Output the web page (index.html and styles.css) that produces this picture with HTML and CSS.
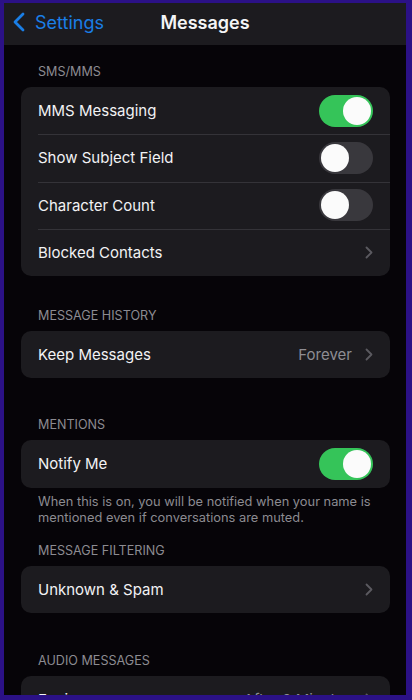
FILE: index.html
```html
<!DOCTYPE html>
<html>
<head>
<meta charset="utf-8">
<link rel="stylesheet" href="styles.css">
</head>
<body>
<div class="screen">
  <div class="nav">
    <div class="back">
      <svg class="back-icon" width="14" height="20" viewBox="0 0 14 20"><path d="M11 2 L3 10 L11 18" fill="none" stroke="#1a7ee6" stroke-width="2.8" stroke-linecap="round" stroke-linejoin="round"/></svg>
      <span>Settings</span>
    </div>
    <div class="title">Messages</div>
  </div>
  <div class="content">
    <div class="header h1">SMS/MMS</div>
    <div class="group">
      <div class="row"><span class="label">MMS Messaging</span><span class="toggle on"><span class="knob"></span></span></div>
      <div class="row"><span class="label">Show Subject Field</span><span class="toggle"><span class="knob"></span></span></div>
      <div class="row"><span class="label">Character Count</span><span class="toggle"><span class="knob"></span></span></div>
      <div class="row"><span class="label">Blocked Contacts</span><span class="chev"><svg width="8" height="13" viewBox="0 0 8 13"><path d="M1.5 1.5 L6.5 6.5 L1.5 11.5" fill="none" stroke="#5b5a60" stroke-width="1.8" stroke-linecap="round" stroke-linejoin="round"/></svg></span></div>
    </div>
    <div class="header h2">MESSAGE HISTORY</div>
    <div class="group">
      <div class="row"><span class="label">Keep Messages</span><span class="value">Forever</span><span class="chev"><svg width="8" height="13" viewBox="0 0 8 13"><path d="M1.5 1.5 L6.5 6.5 L1.5 11.5" fill="none" stroke="#5b5a60" stroke-width="1.8" stroke-linecap="round" stroke-linejoin="round"/></svg></span></div>
    </div>
    <div class="header h3">MENTIONS</div>
    <div class="group">
      <div class="row"><span class="label">Notify Me</span><span class="toggle on"><span class="knob"></span></span></div>
    </div>
    <div class="footer">When this is on, you will be notified when your name is mentioned even if conversations are muted.</div>
    <div class="header h4">MESSAGE FILTERING</div>
    <div class="group">
      <div class="row"><span class="label">Unknown &amp; Spam</span><span class="chev"><svg width="8" height="13" viewBox="0 0 8 13"><path d="M1.5 1.5 L6.5 6.5 L1.5 11.5" fill="none" stroke="#5b5a60" stroke-width="1.8" stroke-linecap="round" stroke-linejoin="round"/></svg></span></div>
    </div>
    <div class="header h5">AUDIO MESSAGES</div>
    <div class="group">
      <div class="row"><span class="label">Expire</span><span class="value">After 2 Minutes</span><span class="chev"><svg width="8" height="13" viewBox="0 0 8 13"><path d="M1.5 1.5 L6.5 6.5 L1.5 11.5" fill="none" stroke="#5b5a60" stroke-width="1.8" stroke-linecap="round" stroke-linejoin="round"/></svg></span></div>
    </div>
  </div>
</div>
</body>
</html>
```
FILE: styles.css
```css
* { box-sizing: border-box; }
html, body { margin: 0; padding: 0; }
body {
  background: #2b1186;
  font-family: "Inter", "Liberation Sans", sans-serif;
}
.screen {
  height: 700px;
  width: 412px;
  border-style: solid;
  border-color: #2b1186;
  border-width: 3px 6px 5px 4px;
  background: #060408;
  overflow: hidden;
}
.nav {
  height: 42px;
  background: #1c1b1f;
  display: flex;
  align-items: center;
  justify-content: center;
  position: relative;
}
.back {
  position: absolute;
  left: 8px;
  top: 0;
  height: 38px;
  display: flex;
  align-items: center;
  gap: 9px;
  color: #1a7ee6;
  font-size: 18px;
}
.back-icon { display: block; }
.title {
  color: #f4f4f6;
  font-size: 18px;
  font-weight: 600;
  margin-top: -4px;
}
.content {
  margin: 0 16px 0 17px;
}
.header {
  color: #8c8b91;
  font-size: 12.6px;
  line-height: 16px;
  padding-left: 17px;
  margin-bottom: 7px;
}
.h1 { margin-top: 19px; }
.h2 { margin-top: 32px; }
.h3 { margin-top: 39px; }
.h4 { margin-top: 17px; }
.h5 { margin-top: 40px; }
.group {
  background: #1c1b1f;
  border-radius: 10px;
  overflow: hidden;
}
.row {
  height: 47.25px;
  display: flex;
  align-items: center;
  padding: 0 17px;
  position: relative;
  color: #f2f2f4;
  font-size: 15px;
}
.row + .row::before {
  content: "";
  position: absolute;
  top: 0;
  left: 17px;
  right: 0;
  height: 1px;
  background: #343338;
}
.label { flex: 1; }
.value {
  color: #8e8d93;
  margin-right: 13px;
}
.chev { display: flex; align-items: center; }
.toggle {
  width: 54px;
  height: 32px;
  border-radius: 16px;
  background: #39383d;
  position: relative;
}
.toggle .knob {
  position: absolute;
  top: 2px;
  left: 2px;
  width: 28px;
  height: 28px;
  border-radius: 50%;
  background: #fbfbfb;
}
.toggle.on { background: #35c459; }
.toggle.on .knob { left: 24px; }
.footer {
  color: #8c8b91;
  font-size: 12.85px;
  line-height: 16px;
  padding-left: 17px;
  margin-top: 6px;
}
```
